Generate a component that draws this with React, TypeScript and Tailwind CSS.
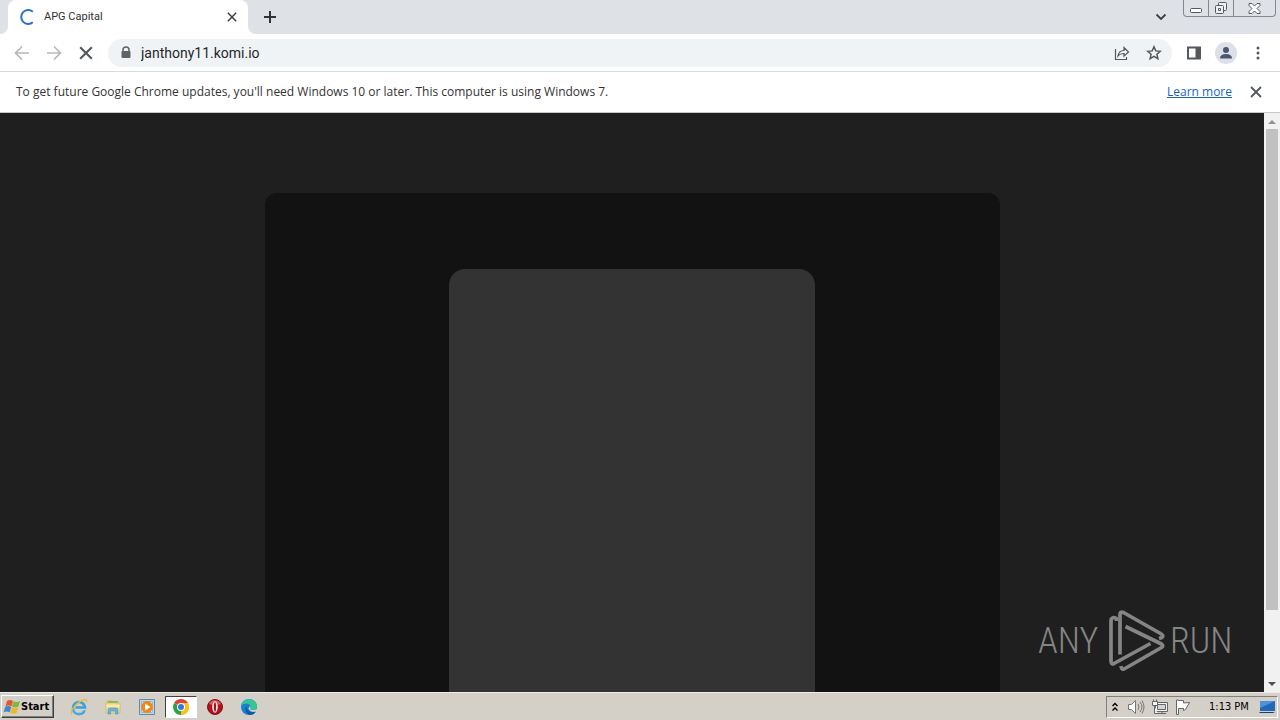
import type { ReactNode } from "react";

const quickLaunch: { name: string; icon: ReactNode; active?: boolean }[] = [
  { name: "Internet Explorer", icon: <ExplorerIcon /> },
  { name: "File Explorer", icon: <FolderIcon /> },
  { name: "Media Player", icon: <PlayerIcon /> },
  { name: "Google Chrome", icon: <ChromeIcon />, active: true },
  { name: "Opera", icon: <OperaIcon /> },
  { name: "Microsoft Edge", icon: <EdgeIcon /> },
];

function CloseIcon({ className }: { className: string }) {
  return (
    <svg viewBox="0 0 12 12" className={className} fill="none" stroke="currentColor">
      <path d="M1 1l10 10M11 1L1 11" strokeWidth="1.8" />
    </svg>
  );
}

function ArrowIcon({ back = false }: { back?: boolean }) {
  return (
    <svg viewBox="0 0 16 16" className="size-4" fill="none" stroke="currentColor" strokeWidth="1.7">
      <path d={back ? "M15 8H2M8 1.5L1.5 8L8 14.5" : "M1 8h13M8 1.5L14.5 8L8 14.5"} />
    </svg>
  );
}

function ExplorerIcon() {
  return (
    <svg viewBox="0 0 18 18" className="size-[18px]" fill="none">
      <path d="M14.6 12.2A6 6 0 1 1 15 9.5H5.5" stroke="#3f9edb" strokeWidth="2.6" />
      <path d="M14 12.2A5.7 5.7 0 0 1 4 12" stroke="#8bd0f2" strokeWidth="1" />
      <path d="M2.2 16.3C-.5 14 4 7.5 9.5 3.8C14 .8 18 .4 16.3 4.5" stroke="#e6bd45" strokeWidth="1.4" />
    </svg>
  );
}

function FolderIcon() {
  return (
    <svg viewBox="0 0 18 18" className="size-[18px]">
      <path d="M2 3l1-1h5l1 1h5v3H2z" fill="#e4c76d" />
      <path d="M4 3h10v6H4z" fill="#78b982" />
      <path d="M2 5h14v10H2z" fill="#f4df91" stroke="#d2b159" strokeWidth=".7" />
      <path d="M2 8h14" stroke="#fff4c5" />
      <path d="M4 16v-4q0-2 2-2h6q2 0 2 2v4h-2.5v-3h-5v3z" fill="#67b7dc" stroke="#4d91b4" strokeWidth=".6" />
    </svg>
  );
}

function PlayerIcon() {
  return (
    <svg viewBox="0 0 18 18" className="size-[18px]">
      <path d="M1.5 1.5h15v15h-15z" fill="#b9daf3" stroke="#6189ad" />
      <path d="M3.5 3.5h11v11h-11z" fill="#dceefa" stroke="#8fb9dc" />
      <circle cx="9" cy="9" r="5.9" fill="#ef8712" />
      <path d="M7 5.5L12.5 9L7 12.5z" fill="#fff" />
    </svg>
  );
}

function ChromeIcon() {
  return (
    <svg viewBox="0 0 18 18" className="size-[18px]">
      <path d="M9 9L2.1 5A8 8 0 0 1 15.9 5z" fill="#e34133" />
      <path d="M9 9L15.9 5A8 8 0 0 1 9 17z" fill="#fbc116" />
      <path d="M9 9L9 17A8 8 0 0 1 2.1 5z" fill="#2da14c" />
      <path d="M9 5h6.9A8 8 0 0 1 9 17l3.4-6z" fill="#fbc116" />
      <circle cx="9" cy="9" r="4" fill="#fff" />
      <circle cx="9" cy="9" r="3" fill="#3478dd" />
    </svg>
  );
}

function OperaIcon() {
  return (
    <svg viewBox="0 0 18 18" className="size-[18px]">
      <circle cx="9" cy="9" r="7.5" fill="#b80e19" stroke="#78151a" />
      <path d="M3 6a6.6 6.6 0 0 1 12 0Q9 8 3 6" fill="#dc5b61" />
      <ellipse cx="9" cy="9" rx="2.8" ry="5.8" fill="#eee8e8" />
      <ellipse cx="9" cy="9" rx="1.1" ry="4.8" fill="#9b151d" />
    </svg>
  );
}

function EdgeIcon() {
  return (
    <svg viewBox="0 0 18 18" className="size-[18px]">
      <circle cx="9" cy="9" r="8" fill="#1681cf" />
      <path d="M1.1 8C2-1 16-1 17 8q0 4-4.5 4-3 0-2-2.2C11.5 6 5 3.5 1.1 8" fill="#38c690" />
      <path d="M1.1 8C2 3 5 1 9 1q3 0 5 2C7 1 3 4 1.1 8" fill="#2cb8d8" />
      <path d="M6.5 8C4 11 6 16 10 16.9q3.8 0 6-3.5C11 15.5 6.5 13 6.5 8" fill="#1357a5" />
      <path d="M10.5 9.8Q9.5 12 12.5 12q2 0 5-1.1v2.4l-1.5.1Q11 15 8.8 11.3q-.5-1.5 1-3 .9.3.7 1.5" fill="#d4d0c8" />
    </svg>
  );
}

function StartLogo() {
  return (
    <svg viewBox="0 0 18 16" className="h-4 w-[18px]">
      <path d="M4 2q3-2 6 0L8.5 7.5q-3-1.8-6 0z" fill="#e4572b" />
      <path d="M10.5 2.3q3 1.7 6.5-.4L15.4 7.5q-3 1.7-6.4 0z" fill="#80b83d" />
      <path d="M2.2 8q3-1.8 6 0L6.6 13.5q-3-1.8-6 0z" fill="#3989d1" />
      <path d="M8.8 8.2q3 1.7 6.4.2l-1.6 5.5q-3 1.7-6.3-.2z" fill="#f0b629" />
    </svg>
  );
}

function TabStrip() {
  return (
    <header className="flex h-[34px] shrink-0 bg-[#dee1e6]">
      <div className="flex w-2 bg-white"><span className="flex-1 rounded-br-lg bg-[#dee1e6]" /></div>
      <div className="flex w-60 items-center rounded-t-lg bg-white pr-2.5 pl-3">
        <svg viewBox="0 0 16 16" className="size-4" fill="none">
          <path d="M12.8 2.7A7 7 0 1 0 12.8 13.3" stroke="#2f70c9" strokeWidth="2" />
        </svg>
        <span className="ml-2 flex-1 font-['Roboto',sans-serif] text-[11px] text-[#303236]">APG Capital</span>
        <button aria-label="Close tab" className="grid size-3 place-items-center text-[#3c4043]">
          <CloseIcon className="size-2.5" />
        </button>
      </div>
      <div className="flex w-2 bg-white"><span className="flex-1 rounded-bl-lg bg-[#dee1e6]" /></div>
      <button aria-label="New tab" className="ml-1.5 grid w-4 place-items-center text-[#303338]">
        <svg viewBox="0 0 12 12" className="size-3" stroke="currentColor" strokeWidth="2"><path d="M6 0v12M0 6h12" /></svg>
      </button>
      <div className="flex-1" />
      <button aria-label="Search tabs" className="mr-4 grid w-3 place-items-center text-[#3c4043]">
        <svg viewBox="0 0 12 8" className="h-2 w-3" fill="none" stroke="currentColor" strokeWidth="1.8"><path d="M1.5 1.5L6 6l4.5-4.5" /></svg>
      </button>
      <div className="mr-1 flex h-[17px] w-[93px] divide-x divide-[#85898f] rounded-b-[4px] border border-t-0 border-[#85898f] text-[#555960]">
        <button aria-label="Minimize" className="grid w-[25px] place-items-center pt-0.5">
          <svg viewBox="0 0 12 10" className="h-2.5 w-3" fill="#fff" stroke="currentColor"><rect x=".5" y="4.5" width="11" height="4" rx="1" /></svg>
        </button>
        <button aria-label="Restore" className="grid w-[25px] place-items-center">
          <svg viewBox="0 0 14 14" className="size-3.5" fill="#eef0f3" stroke="currentColor"><rect x="4.5" y="1.5" width="8" height="8" rx="1" /><rect x="1.5" y="4.5" width="8" height="8" rx="1" /><path d="M4.5 7.5h2v2h-2z" /></svg>
        </button>
        <button aria-label="Close" className="grid flex-1 place-items-center">
          <svg viewBox="0 0 13 11" className="h-[11px] w-[13px]" fill="#fff" stroke="currentColor"><path d="M1 .5h3l2.5 2.5L9 .5h3v2L9 5.5l3 3v2H9L6.5 8 4 10.5H1v-2l3-3-3-3z" /></svg>
        </button>
      </div>
    </header>
  );
}

function Toolbar() {
  return (
    <nav aria-label="Browser" className="flex h-[38px] shrink-0 items-center border-b border-[#d9dbde] bg-white px-3.5 text-[#54575b]">
      <div className="flex gap-4">
        <button aria-label="Back" className="text-[#b6b8bb]"><ArrowIcon back /></button>
        <button aria-label="Forward" className="text-[#b6b8bb]"><ArrowIcon /></button>
        <button aria-label="Stop loading" className="grid size-4 place-items-center"><CloseIcon className="size-3.5" /></button>
      </div>
      <div className="ml-3.5 flex h-7 flex-1 items-center rounded-full bg-[#f0f3f5] pr-2.5 pl-3">
        <svg viewBox="0 0 12 14" className="h-3.5 w-3"><path d="M3 6V4a3 3 0 0 1 6 0v2" fill="none" stroke="#5f6368" strokeWidth="1.5" /><rect x="1.5" y="5" width="9" height="7" rx="1" fill="#5f6368" /></svg>
        <input aria-label="Address" defaultValue="janthony11.komi.io" className="ml-[9px] min-w-0 flex-1 bg-transparent font-['Roboto',sans-serif] text-sm text-[#25272a] outline-none" />
        <div className="flex items-center gap-4">
          <button aria-label="Share">
            <svg viewBox="0 0 16 16" className="size-4" fill="none" stroke="currentColor" strokeWidth="1.2"><path d="M1.5 4v10.5h11V12M4 11c.5-4 2.5-5.5 6-5.5v-3L14.5 7 10 11.2V8.5C7.5 8.4 5.5 9 4 11z" /></svg>
          </button>
          <button aria-label="Bookmark">
            <svg viewBox="0 0 16 16" className="size-4" fill="none" stroke="currentColor" strokeWidth="1.5"><path d="M8 1.8l1.8 4.1 4.5.4-3.4 3 1 4.4L8 11.4l-3.9 2.3 1-4.4-3.4-3 4.5-.4z" /></svg>
          </button>
        </div>
      </div>
      <div className="ml-3.5 flex items-center gap-[13px]">
        <button aria-label="Side panel">
          <svg viewBox="0 0 16 16" className="size-4"><path d="M2 2.5h12v11H2z" fill="#fff" stroke="currentColor" strokeWidth="2" /><path d="M9.5 2H15v12H9.5z" fill="currentColor" /></svg>
        </button>
        <button aria-label="Profile" className="grid size-[22px] place-items-center rounded-full bg-[#dde1e7]">
          <svg viewBox="0 0 14 14" className="size-3.5" fill="#4b5670"><circle cx="7" cy="4" r="3" /><path d="M1 12.5c0-3 2-4.5 6-4.5s6 1.5 6 4.5z" /></svg>
        </button>
        <button aria-label="Menu">
          <svg viewBox="0 0 16 16" className="size-4" fill="currentColor"><circle cx="8" cy="3" r="1.5" /><circle cx="8" cy="8" r="1.5" /><circle cx="8" cy="13" r="1.5" /></svg>
        </button>
      </div>
    </nav>
  );
}

function Watermark() {
  return (
    <div className="absolute right-8 bottom-5 flex h-[62px] items-center gap-1 pr-0.5 font-['Roboto_Condensed',sans-serif] text-[36px] leading-none font-light text-[#858585]">
      <span className="w-[66px]">ANY</span>
      <svg viewBox="0 0 58 62" className="h-[62px] w-[58px]" fill="none" stroke="currentColor" strokeWidth="3.7" strokeLinejoin="round" strokeLinecap="butt">
        <path d="M8.5 11V9Q8 7.5 5.5 7.5Q3 8 3 11v40q0 4 3 2.5L42.5 33.5" />
        <path d="M12 44.5V5q0-4 3.5-2.5l37 21q3.5 2 1.5 4l-3 1" />
        <path d="M17.5 16.5l36 17.5q2.5 1.5 0 3.5L17 58.5q-3.5 2-4-2.5" />
      </svg>
      <span className="w-[60px]">RUN</span>
    </div>
  );
}

function ScrollBar() {
  return (
    <div className="flex w-4 shrink-0 flex-col items-center bg-[#f1f1f1]">
      <button aria-label="Scroll up" className="grid h-4 w-full place-items-center pt-0.5"><svg viewBox="0 0 8 4" className="h-1 w-2" fill="#929292"><path d="M4 0l4 4H0z" /></svg></button>
      <div className="h-[481px] w-3 bg-[#c1c1c1]" />
      <div className="flex-1" />
      <button aria-label="Scroll down" className="grid h-[17px] w-full place-items-center"><svg viewBox="0 0 8 4" className="h-1 w-2" fill="#4f4f4f"><path d="M4 4L0 0h8z" /></svg></button>
    </div>
  );
}

function TaskBar() {
  return (
    <footer className="flex h-7 shrink-0 items-center border-t border-[#eeeae4] bg-[#d4d0c8] pl-px text-[11px] text-black">
      <button className="flex h-[23px] w-[53px] items-center border border-t-white border-r-[#404040] border-b-[#404040] border-l-white pl-px font-['DejaVu_Sans_Condensed',sans-serif] font-bold shadow-[inset_-1px_-1px_0_#808080]">
        <StartLogo /><span className="pt-0.5">Start</span>
      </button>
      <div className="ml-[9px] flex gap-0.5">
        {quickLaunch.map(({ name, icon, active }) => (
          <button key={name} aria-label={name} className={active ? "grid h-[22px] w-8 place-items-center border border-t-[#404040] border-r-white border-b-white border-l-[#404040] bg-white" : "grid h-[22px] w-8 place-items-center"}>{icon}</button>
        ))}
      </div>
      <div className="flex-1" />
      <div className="mr-0.5 flex h-[22px] items-center border border-t-[#808080] border-r-white border-b-white border-l-[#808080] pr-0.5 pl-1">
        <button aria-label="Show hidden icons"><svg viewBox="0 0 8 10" className="h-2.5 w-2" fill="none" stroke="#000" strokeWidth="1.4"><path d="M1.5 4L4 1.5 6.5 4M1.5 8.5L4 6l2.5 2.5" /></svg></button>
        <svg aria-label="Volume" viewBox="0 0 18 16" className="ml-2 h-4 w-[18px]" fill="#fff" stroke="#777"><path d="M1.5 5.5h3l4-4v13l-4-4h-3z" /><path d="M11 5q2 3 0 6M13 3q4 5 0 10M15 1.5q4 6.5 0 13" fill="none" /></svg>
        <svg aria-label="Network" viewBox="0 0 18 16" className="ml-1.5 h-4 w-[18px]" fill="#f4f4f4" stroke="#666"><path d="M4.5 3.5h12v9h-12z" /><path d="M6.5 5.5h8v5h-8z" fill="#d5d5d5" /><path d="M1.5 2.5h5v4h-5zM2.5 .5v2M5.5 .5v2M3.5 6.5v8h3M6 14.5h9M11 12.5v2" /></svg>
        <svg aria-label="Action center" viewBox="0 0 16 16" className="ml-1.5 size-4" fill="#fff" stroke="#666"><path d="M1.5 1v14.5h2V9.5h5v2l2-1 4-7-6 .5V1.5h-5V1z" /></svg>
        <time className="ml-[18px] w-10 pt-0.5 font-['DejaVu_Sans_Condensed',sans-serif] text-[11px] whitespace-nowrap">1:13 PM</time>
        <button aria-label="Show desktop" className="ml-2.5">
          <svg viewBox="0 0 16 14" className="h-3.5 w-4"><path d="M1 1h15v10H1z" fill="#2069b8" /><path d="M1 1h15L1 8z" fill="#4c93d7" /><path d="M1 12h13l2 1H0z" fill="#183e70" /></svg>
        </button>
      </div>
    </footer>
  );
}

export default function App() {
  return (
    <div className="flex h-screen flex-col overflow-hidden bg-[#1f1f1f] font-['Open_Sans',sans-serif]">
      <TabStrip />
      <Toolbar />
      <div role="status" className="flex h-[41px] shrink-0 items-center border-b border-[#c8c8c8] bg-white pr-[18px] pl-4 text-xs text-[#333]">
        <p className="flex-1">To get future Google Chrome updates, you'll need Windows 10 or later. This computer is using Windows 7.</p>
        <a href="#" className="text-[#1764c0] underline">Learn more</a>
        <button aria-label="Dismiss" className="ml-[18px] grid size-3 place-items-center text-[#54575b]"><CloseIcon className="size-3" /></button>
      </div>
      <div className="flex min-h-0 flex-1">
        <main className="relative flex min-w-0 flex-1 justify-center overflow-hidden bg-[#1f1f1f] pt-20">
          <section className="flex w-[735px] max-w-full justify-center rounded-t-xl bg-[#121212] pt-[76px]">
            <div className="w-[366px] max-w-full rounded-t-2xl bg-[#333]" />
          </section>
          <Watermark />
        </main>
        <ScrollBar />
      </div>
      <TaskBar />
    </div>
  );
}
